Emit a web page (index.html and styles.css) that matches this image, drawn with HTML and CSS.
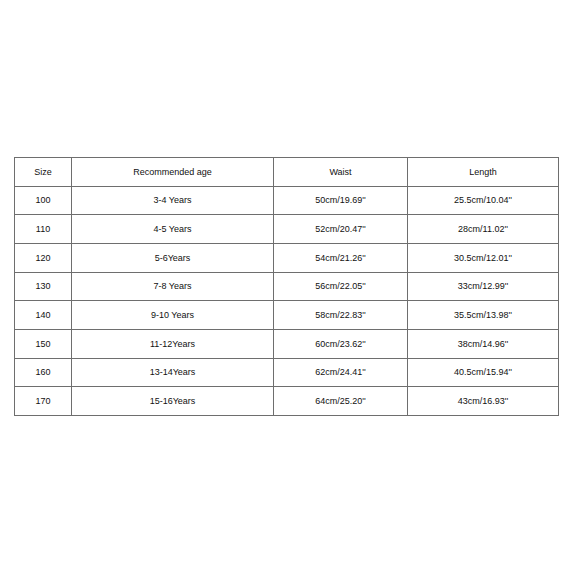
FILE: index.html
```html
<!DOCTYPE html>
<html>
<head>
<meta charset="utf-8">
<link rel="stylesheet" href="styles.css">
</head>
<body>
<div class="page">
<table class="size-table">
<colgroup>
<col class="c-size"><col class="c-age"><col class="c-waist"><col class="c-length">
</colgroup>
<tr><td>Size</td><td>Recommended age</td><td>Waist</td><td>Length</td></tr>
<tr><td>100</td><td>3-4 Years</td><td>50cm/19.69''</td><td>25.5cm/10.04''</td></tr>
<tr><td>110</td><td>4-5 Years</td><td>52cm/20.47''</td><td>28cm/11.02''</td></tr>
<tr><td>120</td><td>5-6Years</td><td>54cm/21.26''</td><td>30.5cm/12.01''</td></tr>
<tr><td>130</td><td>7-8 Years</td><td>56cm/22.05''</td><td>33cm/12.99''</td></tr>
<tr><td>140</td><td>9-10 Years</td><td>58cm/22.83''</td><td>35.5cm/13.98''</td></tr>
<tr><td>150</td><td>11-12Years</td><td>60cm/23.62''</td><td>38cm/14.96''</td></tr>
<tr><td>160</td><td>13-14Years</td><td>62cm/24.41''</td><td>40.5cm/15.94''</td></tr>
<tr><td>170</td><td>15-16Years</td><td>64cm/25.20''</td><td>43cm/16.93''</td></tr>
</table>
</div>
</body>
</html>
```

FILE: styles.css
```css
html, body {
  margin: 0;
  padding: 0;
  background: #ffffff;
}
.page {
  padding: 157px 0 0 14px;
}
.size-table {
  border-collapse: collapse;
  table-layout: fixed;
  width: 544px;
  font-family: "Liberation Sans", Arial, sans-serif;
  font-size: 9px;
  color: #111111;
}
.c-size { width: 57px; }
.c-age { width: 202px; }
.c-waist { width: 134px; }
.c-length { width: 151px; }
.size-table td {
  border: 1px solid #6e6e6e;
  height: 27.67px;
  padding: 0;
  text-align: center;
  vertical-align: middle;
}
```
